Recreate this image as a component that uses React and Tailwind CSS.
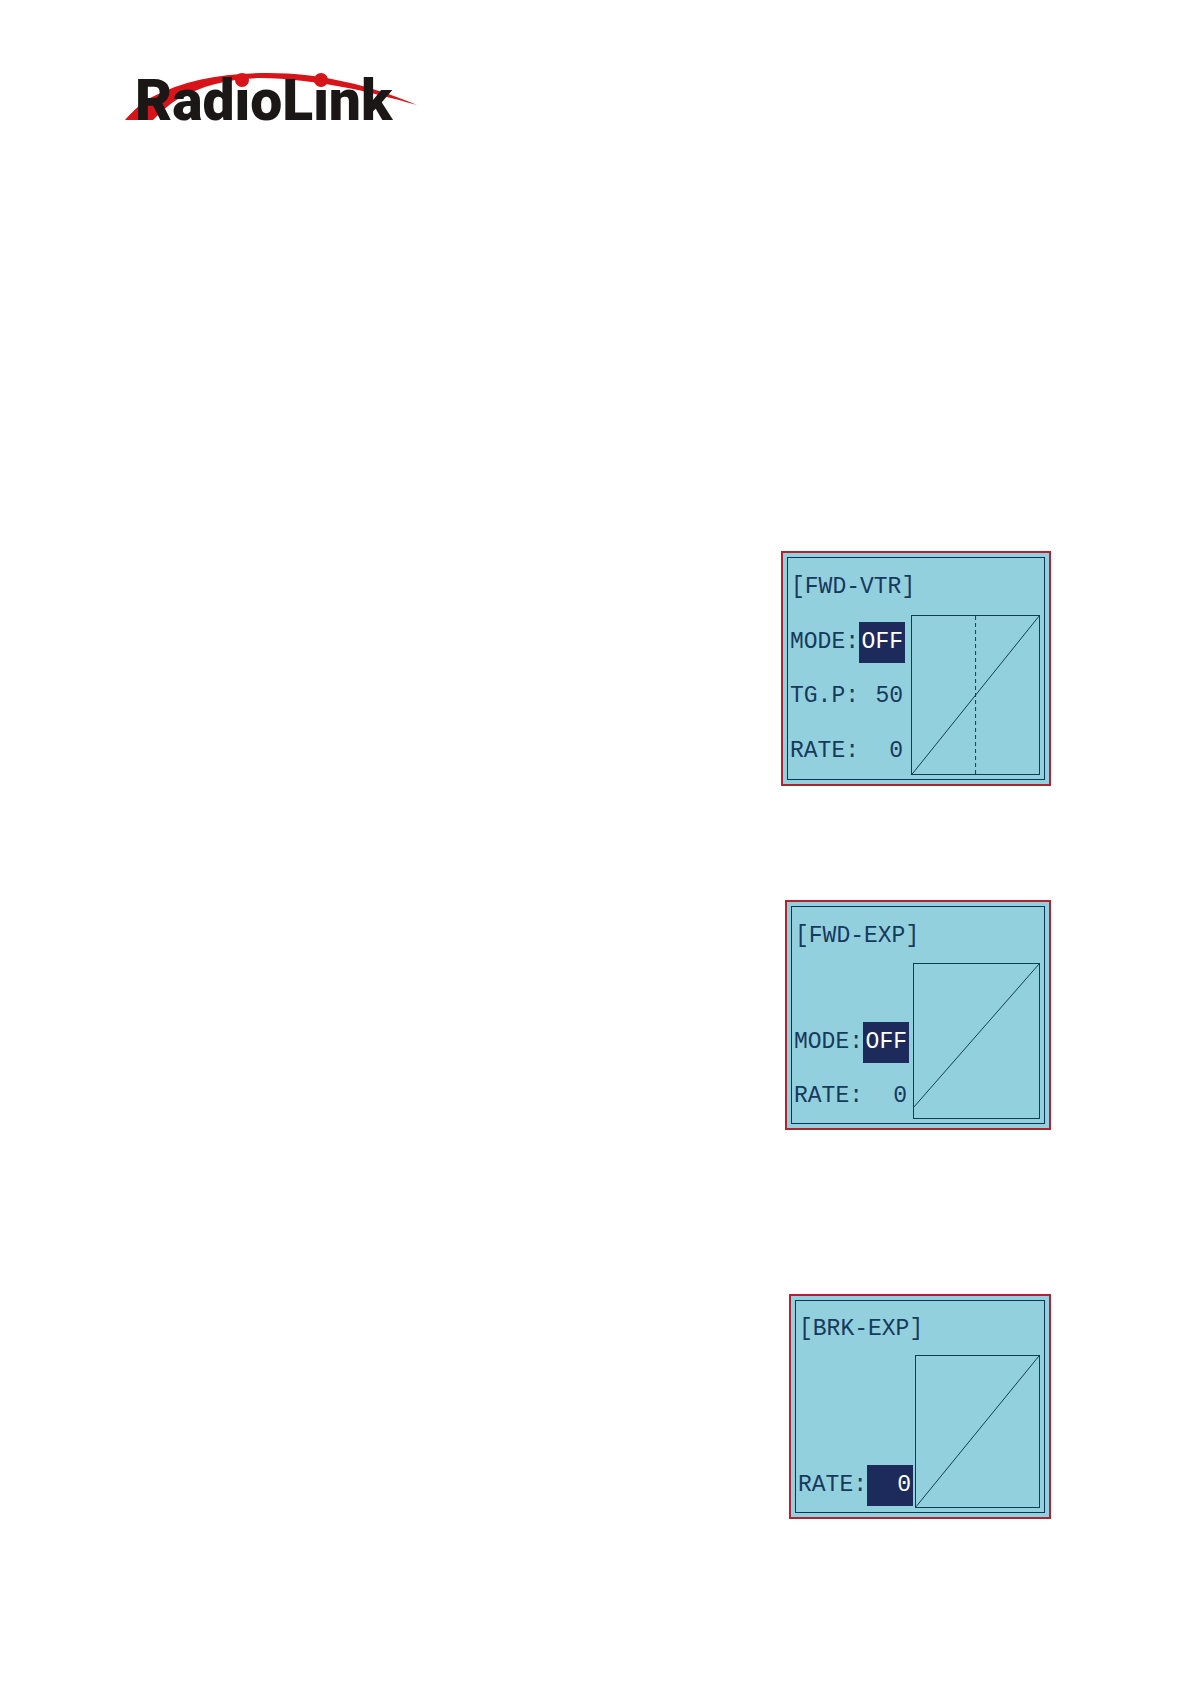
const screens = [
  {
    title: "[FWD-VTR]",
    size: "h-[235px] w-[270px]",
    rows: [
      { label: "MODE:", value: "OFF", active: true },
      { label: "TG.P:", value: "50" },
      { label: "RATE:", value: "0" },
    ],
    start: 100,
    marker: true,
  },
  {
    title: "[FWD-EXP]",
    size: "mt-[114px] h-[230px] w-[266px]",
    rows: [
      null,
      { label: "MODE:", value: "OFF", active: true },
      { label: "RATE:", value: "0" },
    ],
    start: 92.5,
  },
  {
    title: "[BRK-EXP]",
    size: "mt-[164px] h-[225px] w-[262px]",
    rows: [null, null, { label: "RATE:", value: "0", active: true }],
    start: 100,
  },
];

export default function App() {
  return (
    <div className="min-h-screen bg-white pb-[163px]">
      <header className="pl-[122px] pt-[70px]">
        <Logo />
      </header>
      <main className="mt-[411px] flex flex-col items-end pr-[139px]">
        {screens.map((screen) => (
          <Screen key={screen.title} {...screen} />
        ))}
      </main>
    </div>
  );
}

function Logo() {
  return (
    <svg className="block h-[70px] w-[300px] overflow-visible" viewBox="0 0 300 70">
      <path
        d="M3 50 C12 40 20 32 30 27 C62 10 100 3 145 3 C200 3 250 16 295 35 C245 21 195 9 138 8 C105 9 80 16 60 27 C48 33 40 41 31 50 Z"
        fill="#d7141a"
      />
      <text
        x="13"
        y="50"
        fontFamily="Roboto, sans-serif"
        fontSize="57"
        fontWeight="900"
        fill="#1c1717"
      >
        RadioLink
      </text>
      <circle cx="120" cy="10" r="7" fill="#d7141a" />
      <circle cx="199" cy="10" r="7" fill="#d7141a" />
    </svg>
  );
}

function Screen({ title, size, rows, start, marker }) {
  return (
    <section className={`${size} border-2 border-[#b3232f] bg-[#93d0de] p-1`}>
      <div className="grid h-full grid-cols-[48fr_52fr] grid-rows-4 border border-[#0c3558] pt-[2px] font-['Liberation_Mono',monospace] text-[23px] text-[#17395c]">
        <h2 className="col-span-2 flex items-center pl-[3px]">{title}</h2>
        {rows.map((row, i) => (
          <Row key={i} row={row} />
        ))}
        <Curve start={start} marker={marker} />
      </div>
    </section>
  );
}

function Row({ row }) {
  if (!row) return <div className="col-start-1" />;

  return (
    <div className="col-start-1 flex items-center pl-[2px] leading-[41px]">
      <span>{row.label}</span>
      <span
        className={`w-[46px] px-[2px] text-right ${
          row.active ? "bg-[#1d2a5c] text-white" : ""
        }`}
      >
        {row.value}
      </span>
    </div>
  );
}

function Curve({ start, marker }) {
  return (
    <div className="col-start-2 row-span-3 row-start-2 mb-1 mr-1 min-h-0 border border-[#0e3f50]">
      <svg
        className="block h-full w-full"
        viewBox="0 0 100 100"
        preserveAspectRatio="none"
        stroke="#0e3f50"
      >
        <line x1="0" y1={start} x2="100" y2="0" vectorEffect="non-scaling-stroke" />
        {marker && (
          <line
            x1="50"
            y1="0"
            x2="50"
            y2="100"
            strokeDasharray="4 3"
            vectorEffect="non-scaling-stroke"
          />
        )}
      </svg>
    </div>
  );
}
